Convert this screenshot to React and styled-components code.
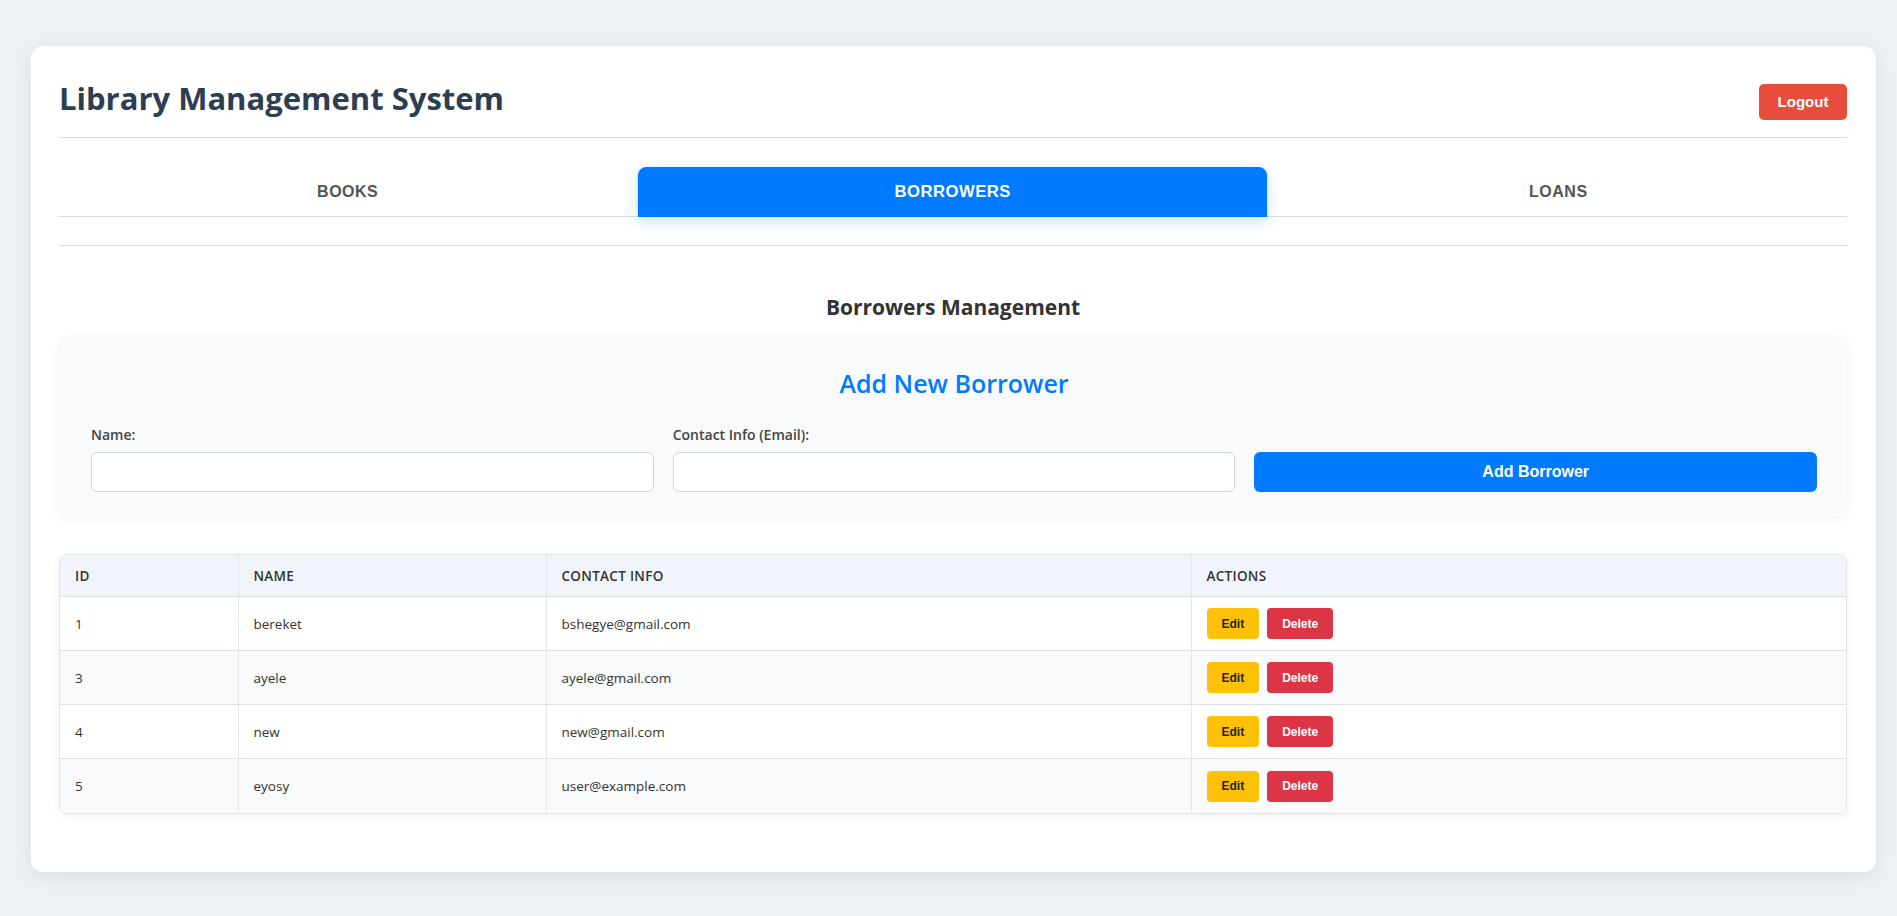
import React from "react";
import styled, { createGlobalStyle, css } from "styled-components";

const GlobalStyle = createGlobalStyle`
  * { box-sizing: border-box; }
  html, body { margin: 0; padding: 0; }
  body {
    background: #edf1f5;
    font-family: "Open Sans", "Noto Sans", "DejaVu Sans", sans-serif;
    color: #333;
    min-height: 100vh;
  }
`;

const Page = styled.div`
  padding: 46px 21px 44px 31px;
`;

const Card = styled.div`
  background: #ffffff;
  border-radius: 12px;
  box-shadow: 0 4px 20px rgba(0, 0, 0, 0.08);
  padding: 28px 29px 28px 28px;
`;

const Header = styled.header`
  display: flex;
  justify-content: space-between;
  align-items: center;
  height: 64px;
  padding-bottom: 8px;
  border-bottom: 1px solid #dddddd;
`;

const Title = styled.h1`
  margin: 0 0 8px;
  font-size: 31px;
  font-weight: 700;
  color: #2c3e50;
  line-height: normal;
`;

const BaseButton = styled.button`
  font-family: "Liberation Sans", Arial, sans-serif;
  font-weight: 700;
  border: none;
  cursor: pointer;
  color: #ffffff;
`;

const LogoutButton = styled(BaseButton)`
  background: #e74c3c;
  font-size: 15px;
  height: 36px;
  width: 88px;
  border-radius: 5px;
`;

const TabBar = styled.nav`
  margin-top: 30px;
  border-bottom: 1px solid #dddddd;
`;

const TabRow = styled.div`
  display: flex;
  margin: 0 -14px;
`;

const Tab = styled.button`
  flex: 1;
  height: 48px;
  border: none;
  background: transparent;
  font-family: "Liberation Sans", Arial, sans-serif;
  font-size: 16px;
  font-weight: 700;
  letter-spacing: 0.5px;
  text-transform: uppercase;
  color: #555555;
  border-radius: 8px 8px 0 0;
  cursor: pointer;
  ${(p) =>
    p.$active &&
    css`
      background: #007bff;
      color: #ffffff;
      transform: scale(1.04);
      box-shadow: 0 4px 12px rgba(0, 123, 255, 0.2);
    `}
`;

const Section = styled.section`
  margin-top: 28px;
  border-top: 1px solid #dddddd;
  padding-top: 49px;
`;

const SectionTitle = styled.h2`
  margin: 0;
  text-align: center;
  font-size: 21px;
  font-weight: 700;
  line-height: 1.2;
  color: #333333;
`;

const FormCard = styled.div`
  margin-top: 17px;
  background: #f8fafc;
  border-radius: 10px;
  box-shadow: 0 2px 12px rgba(0, 0, 0, 0.06);
  padding: 31px 30px 24px 32px;
`;

const FormTitle = styled.h3`
  margin: 0 0 28px;
  text-align: center;
  font-size: 25px;
  font-weight: 600;
  line-height: 1.24;
  color: #007bff;
`;

const FormGrid = styled.div`
  display: grid;
  grid-template-columns: repeat(3, 1fr);
  gap: 19px;
  align-items: end;
`;

const Field = styled.div`
  display: flex;
  flex-direction: column;
`;

const Label = styled.label`
  font-size: 14px;
  font-weight: 600;
  line-height: 1.2;
  color: #444444;
  margin-bottom: 8px;
`;

const Input = styled.input`
  height: 40px;
  border: 1px solid #cfd4da;
  border-radius: 6px;
  background: #ffffff;
  padding: 0 12px;
  font-size: 14px;
  font-family: inherit;
`;

const AddButton = styled(BaseButton)`
  height: 40px;
  background: #007bff;
  font-size: 16px;
  border-radius: 6px;
`;

const TableWrap = styled.div`
  margin-top: 38px;
  margin-bottom: 30px;
  border: 1px solid #e1e5ea;
  border-radius: 8px;
  overflow: hidden;
  box-shadow: 0 2px 10px rgba(0, 0, 0, 0.06);
`;

const Table = styled.table`
  width: 100%;
  border-collapse: collapse;
  table-layout: fixed;
`;

const Th = styled.th`
  height: 42px;
  padding: 0 15px;
  text-align: left;
  background: #f1f5fb;
  font-size: 13.5px;
  font-weight: 600;
  letter-spacing: 0.3px;
  text-transform: uppercase;
  color: #333333;
  border-bottom: 1px solid #dde1e6;
  border-right: 1px solid #e3e6ea;
  &:last-child { border-right: none; }
`;

const Row = styled.tr`
  background: ${(p) => (p.$alt ? "#f9fafc" : "#ffffff")};
  &:last-child td { border-bottom: none; }
`;

const Td = styled.td`
  height: 54px;
  padding: 0 15px;
  font-size: 13.5px;
  color: #333333;
  border-bottom: 1px solid #dde1e6;
  border-right: 1px solid #e3e6ea;
  &:last-child { border-right: none; }
`;

const Actions = styled.div`
  display: flex;
  gap: 8px;
`;

const SmallButton = styled(BaseButton)`
  height: 31px;
  padding: 0 15px;
  font-size: 12px;
  border-radius: 4px;
  background: ${(p) => (p.$variant === "edit" ? "#ffc107" : "#dc3545")};
  color: ${(p) => (p.$variant === "edit" ? "#212529" : "#ffffff")};
`;

const borrowers = [
  { id: 1, name: "bereket", contact: "bshegye@gmail.com" },
  { id: 3, name: "ayele", contact: "ayele@gmail.com" },
  { id: 4, name: "new", contact: "new@gmail.com" },
  { id: 5, name: "eyosy", contact: "user@example.com" },
];

export default function App() {
  return (
    <>
      <GlobalStyle />
      <Page>
        <Card>
          <Header>
            <Title>Library Management System</Title>
            <LogoutButton>Logout</LogoutButton>
          </Header>

          <TabBar>
            <TabRow>
              <Tab>Books</Tab>
              <Tab $active>Borrowers</Tab>
              <Tab>Loans</Tab>
            </TabRow>
          </TabBar>

          <Section>
            <SectionTitle>Borrowers Management</SectionTitle>

            <FormCard>
              <FormTitle>Add New Borrower</FormTitle>
              <FormGrid>
                <Field>
                  <Label>Name:</Label>
                  <Input type="text" />
                </Field>
                <Field>
                  <Label>Contact Info (Email):</Label>
                  <Input type="email" />
                </Field>
                <AddButton>Add Borrower</AddButton>
              </FormGrid>
            </FormCard>

            <TableWrap>
              <Table>
                <colgroup>
                  <col style={{ width: "178px" }} />
                  <col style={{ width: "308px" }} />
                  <col style={{ width: "645px" }} />
                  <col />
                </colgroup>
                <thead>
                  <tr>
                    <Th>ID</Th>
                    <Th>Name</Th>
                    <Th>Contact Info</Th>
                    <Th>Actions</Th>
                  </tr>
                </thead>
                <tbody>
                  {borrowers.map((b, i) => (
                    <Row key={b.id} $alt={i % 2 === 1}>
                      <Td>{b.id}</Td>
                      <Td>{b.name}</Td>
                      <Td>{b.contact}</Td>
                      <Td>
                        <Actions>
                          <SmallButton $variant="edit">Edit</SmallButton>
                          <SmallButton $variant="delete">Delete</SmallButton>
                        </Actions>
                      </Td>
                    </Row>
                  ))}
                </tbody>
              </Table>
            </TableWrap>
          </Section>
        </Card>
      </Page>
    </>
  );
}
